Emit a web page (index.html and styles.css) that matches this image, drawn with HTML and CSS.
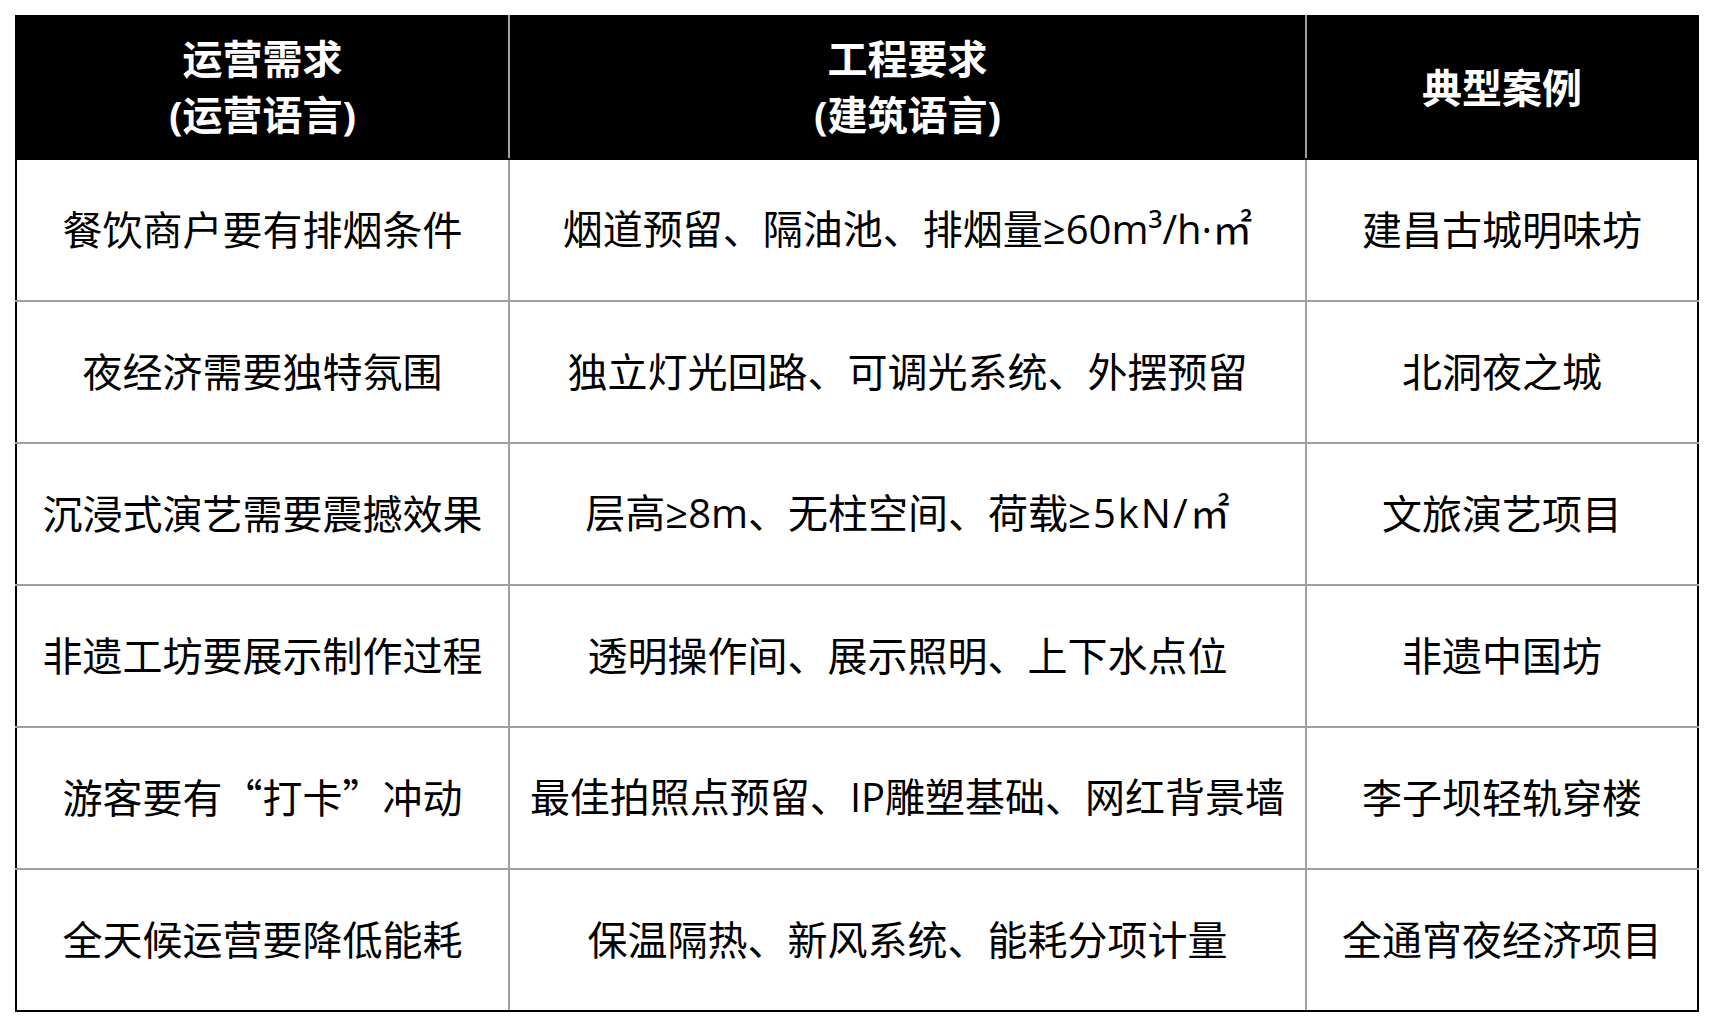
FILE: index.html
```html
<!DOCTYPE html>
<html lang="zh-CN">
<head>
<meta charset="utf-8">
<title>运营需求与工程要求</title>
<link rel="stylesheet" href="styles.css">
</head>
<body>
<table class="req-table">
  <colgroup>
    <col class="col-ops">
    <col class="col-eng">
    <col class="col-case">
  </colgroup>
  <thead>
    <tr>
      <th>运营需求<br><span class="latin">(</span>运营语言<span class="latin">)</span></th>
      <th>工程要求<br><span class="latin">(</span>建筑语言<span class="latin">)</span></th>
      <th>典型案例</th>
    </tr>
  </thead>
  <tbody>
    <tr>
      <td>餐饮商户要有排烟条件</td>
      <td>烟道预留、隔油池、排烟量<span class="latin">≥60m³/h·</span>㎡</td>
      <td>建昌古城明味坊</td>
    </tr>
    <tr>
      <td>夜经济需要独特氛围</td>
      <td>独立灯光回路、可调光系统、外摆预留</td>
      <td>北洞夜之城</td>
    </tr>
    <tr>
      <td>沉浸式演艺需要震撼效果</td>
      <td>层高<span class="latin">≥8m</span>、无柱空间、荷载<span class="latin spaced">≥5kN/</span>㎡</td>
      <td>文旅演艺项目</td>
    </tr>
    <tr>
      <td>非遗工坊要展示制作过程</td>
      <td>透明操作间、展示照明、上下水点位</td>
      <td>非遗中国坊</td>
    </tr>
    <tr>
      <td>游客要有“打卡”冲动</td>
      <td>最佳拍照点预留、<span class="latin">IP</span>雕塑基础、网红背景墙</td>
      <td>李子坝轻轨穿楼</td>
    </tr>
    <tr>
      <td>全天候运营要降低能耗</td>
      <td>保温隔热、新风系统、能耗分项计量</td>
      <td>全通宵夜经济项目</td>
    </tr>
  </tbody>
</table>
</body>
</html>
```

FILE: styles.css
```css
html, body {
  margin: 0;
  padding: 0;
  background: #fff;
}

body {
  padding: 15px 0 0 15px;
  font-family: "Noto Sans CJK SC", "Noto Sans", sans-serif;
  color: #000;
}

.req-table {
  border-collapse: collapse;
  table-layout: fixed;
  width: 1682px;
  border: 2px solid #000;
}

.col-ops { width: 493px; }
.col-eng { width: 797px; }
.col-case { width: 392px; }

.req-table th,
.req-table td {
  border: 2px solid #a0a0a0;
  text-align: center;
  vertical-align: middle;
  padding: 0 0 4px 0;
  font-size: 40px;
  white-space: nowrap;
}

.req-table th {
  height: 137px;
  background: #000;
  color: #fff;
  font-weight: 700;
  line-height: 56px;
  border-top-color: #000;
  border-bottom-color: #000;
}

.req-table th:first-child { border-left-color: #000; }
.req-table th:last-child { border-right-color: #000; }

.req-table td {
  height: 136px;
  line-height: 1.3;
  font-weight: 400;
}

.req-table td:first-child { border-left-color: #000; }
.req-table td:last-child { border-right-color: #000; }
.req-table tbody tr:last-child td { border-bottom-color: #000; }

.latin {
  font-family: "Open Sans", "Noto Sans", sans-serif;
}

.spaced {
  letter-spacing: 2px;
}
```
